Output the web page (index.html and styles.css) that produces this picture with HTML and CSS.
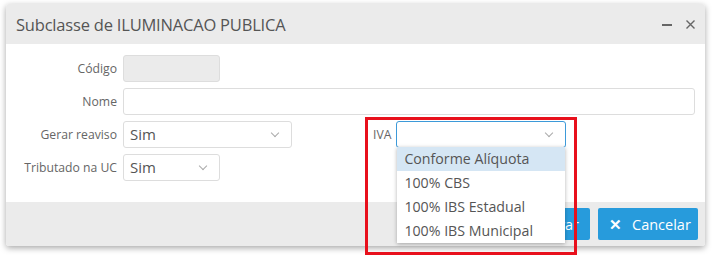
FILE: index.html
```html
<!DOCTYPE html>
<html lang="pt">
<head>
    <meta charset="UTF-8">
    <title>Subclasse de ILUMINACAO PUBLICA</title>
    <link rel="stylesheet" href="styles.css">
</head>
<body>
    <div class="dialog">
        <div class="dialog-header">
            <span class="dialog-title">Subclasse de ILUMINACAO PUBLICA</span>
            <span class="header-tools">
                <span class="tool-min"></span>
                <svg class="tool-close" width="9" height="9" viewBox="0 0 9 9"><path d="M0.5 0.5L8.5 8.5M8.5 0.5L0.5 8.5" stroke="#666" stroke-width="1.4"/></svg>
            </span>
        </div>
        <div class="dialog-body">
            <div class="form-row">
                <label>Código</label>
                <div class="field field-code"></div>
            </div>
            <div class="form-row">
                <label>Nome</label>
                <div class="field field-name"></div>
            </div>
            <div class="form-row">
                <label>Gerar reaviso</label>
                <div class="field select select-wide">Sim<span class="caret"></span></div>
                <div class="iva-group">
                    <label class="iva-label">IVA</label>
                    <div class="iva-wrap">
                        <div class="field select select-iva"><span class="caret"></span></div>
                        <ul class="dropdown">
                            <li class="active">Conforme Alíquota</li>
                            <li>100% CBS</li>
                            <li>100% IBS Estadual</li>
                            <li>100% IBS Municipal</li>
                        </ul>
                    </div>
                </div>
            </div>
            <div class="form-row">
                <label>Tributado na UC</label>
                <div class="field select select-small">Sim<span class="caret"></span></div>
            </div>
        </div>
        <div class="dialog-footer">
            <button class="btn">&#10003;&nbsp; Salvar</button>
            <button class="btn btn-cancel"><span class="btn-x">&#10005;</span>Cancelar</button>
        </div>
    </div>
    <div class="highlight"></div>
</body>
</html>
```

FILE: styles.css
```css
html, body {
    height: 258px;
}
body {
    position: relative;
    margin: 0;
    background: #fff;
    font-family: 'Open Sans', 'Noto Sans', sans-serif;
    color: #555;
    overflow: hidden;
}
.dialog {
    margin: 4px 7px 0 6px;
    width: 699px;
    height: 242px;
    background: #fff;
    border-radius: 3px;
    box-shadow: 0 2px 6px rgba(0,0,0,0.35);
}
.dialog-header {
    height: 40px;
    background: #ebebeb;
    border-radius: 3px 3px 0 0;
    display: flex;
    align-items: center;
    justify-content: space-between;
    padding: 0 10px 0 10px;
}
.dialog-title {
    font-size: 16.5px;
    color: #555;
    letter-spacing: -0.2px;
}
.header-tools {
    display: flex;
    align-items: center;
    gap: 14px;
    padding-top: 1px;
}
.tool-min {
    width: 10px;
    height: 2px;
    background: #666;
}
.dialog-body {
    height: 158px;
    padding-top: 11px;
    box-sizing: border-box;
}
.form-row {
    display: flex;
    align-items: center;
    height: 27px;
    margin-bottom: 6px;
}
.form-row label {
    width: 111px;
    text-align: right;
    font-size: 12.2px;
    color: #666;
    margin-right: 6px;
}
.field {
    height: 27px;
    box-sizing: border-box;
    border: 1px solid #ddd;
    border-radius: 3px;
    background: #fff;
}
.field-code {
    width: 97px;
    background: #ebebeb;
}
.field-name {
    width: 572px;
}
.select {
    position: relative;
    font-size: 15px;
    color: #555;
    padding-left: 6px;
    line-height: 25px;
}
.select-wide {
    width: 169px;
}
.select-small {
    width: 97px;
}
.caret {
    position: absolute;
    right: 13px;
    top: 8px;
    width: 5px;
    height: 5px;
    border-right: 1px solid #aaa;
    border-bottom: 1px solid #aaa;
    transform: rotate(45deg);
}
.iva-group {
    display: flex;
    align-items: center;
    margin-left: 81px;
}
.form-row .iva-label {
    width: auto;
    margin-right: 5px;
}
.iva-wrap {
    position: relative;
}
.select-iva {
    width: 170px;
    border-color: #3d9ad9;
}
.dropdown {
    position: absolute;
    top: 26px;
    left: 1px;
    width: 168px;
    margin: 0;
    padding: 0;
    list-style: none;
    background: #fff;
    box-shadow: 0 1px 4px rgba(0,0,0,0.3);
    z-index: 2;
}
.dropdown li {
    height: 24px;
    line-height: 24px;
    padding-left: 7px;
    font-size: 14.2px;
    color: #555;
}
.dropdown li.active {
    background: #d5e6f4;
}
.dialog-footer {
    height: 44px;
    background: #ebebeb;
    border-radius: 0 0 3px 3px;
    display: flex;
    justify-content: flex-end;
    align-items: center;
    gap: 8px;
    padding-right: 7px;
}
.btn {
    height: 32px;
    border: none;
    border-radius: 2px;
    background: #279bdc;
    color: #fff;
    font-family: 'Open Sans', 'Noto Sans', sans-serif;
    font-size: 14.5px;
    padding: 0 11px;
}
.btn-cancel {
    width: 100px;
}
.btn-x {
    font-weight: bold;
    margin-right: 10px;
}
.highlight {
    position: absolute;
    left: 365px;
    top: 117px;
    width: 206px;
    height: 132px;
    border: 3px solid #e8101c;
    z-index: 3;
}
```
